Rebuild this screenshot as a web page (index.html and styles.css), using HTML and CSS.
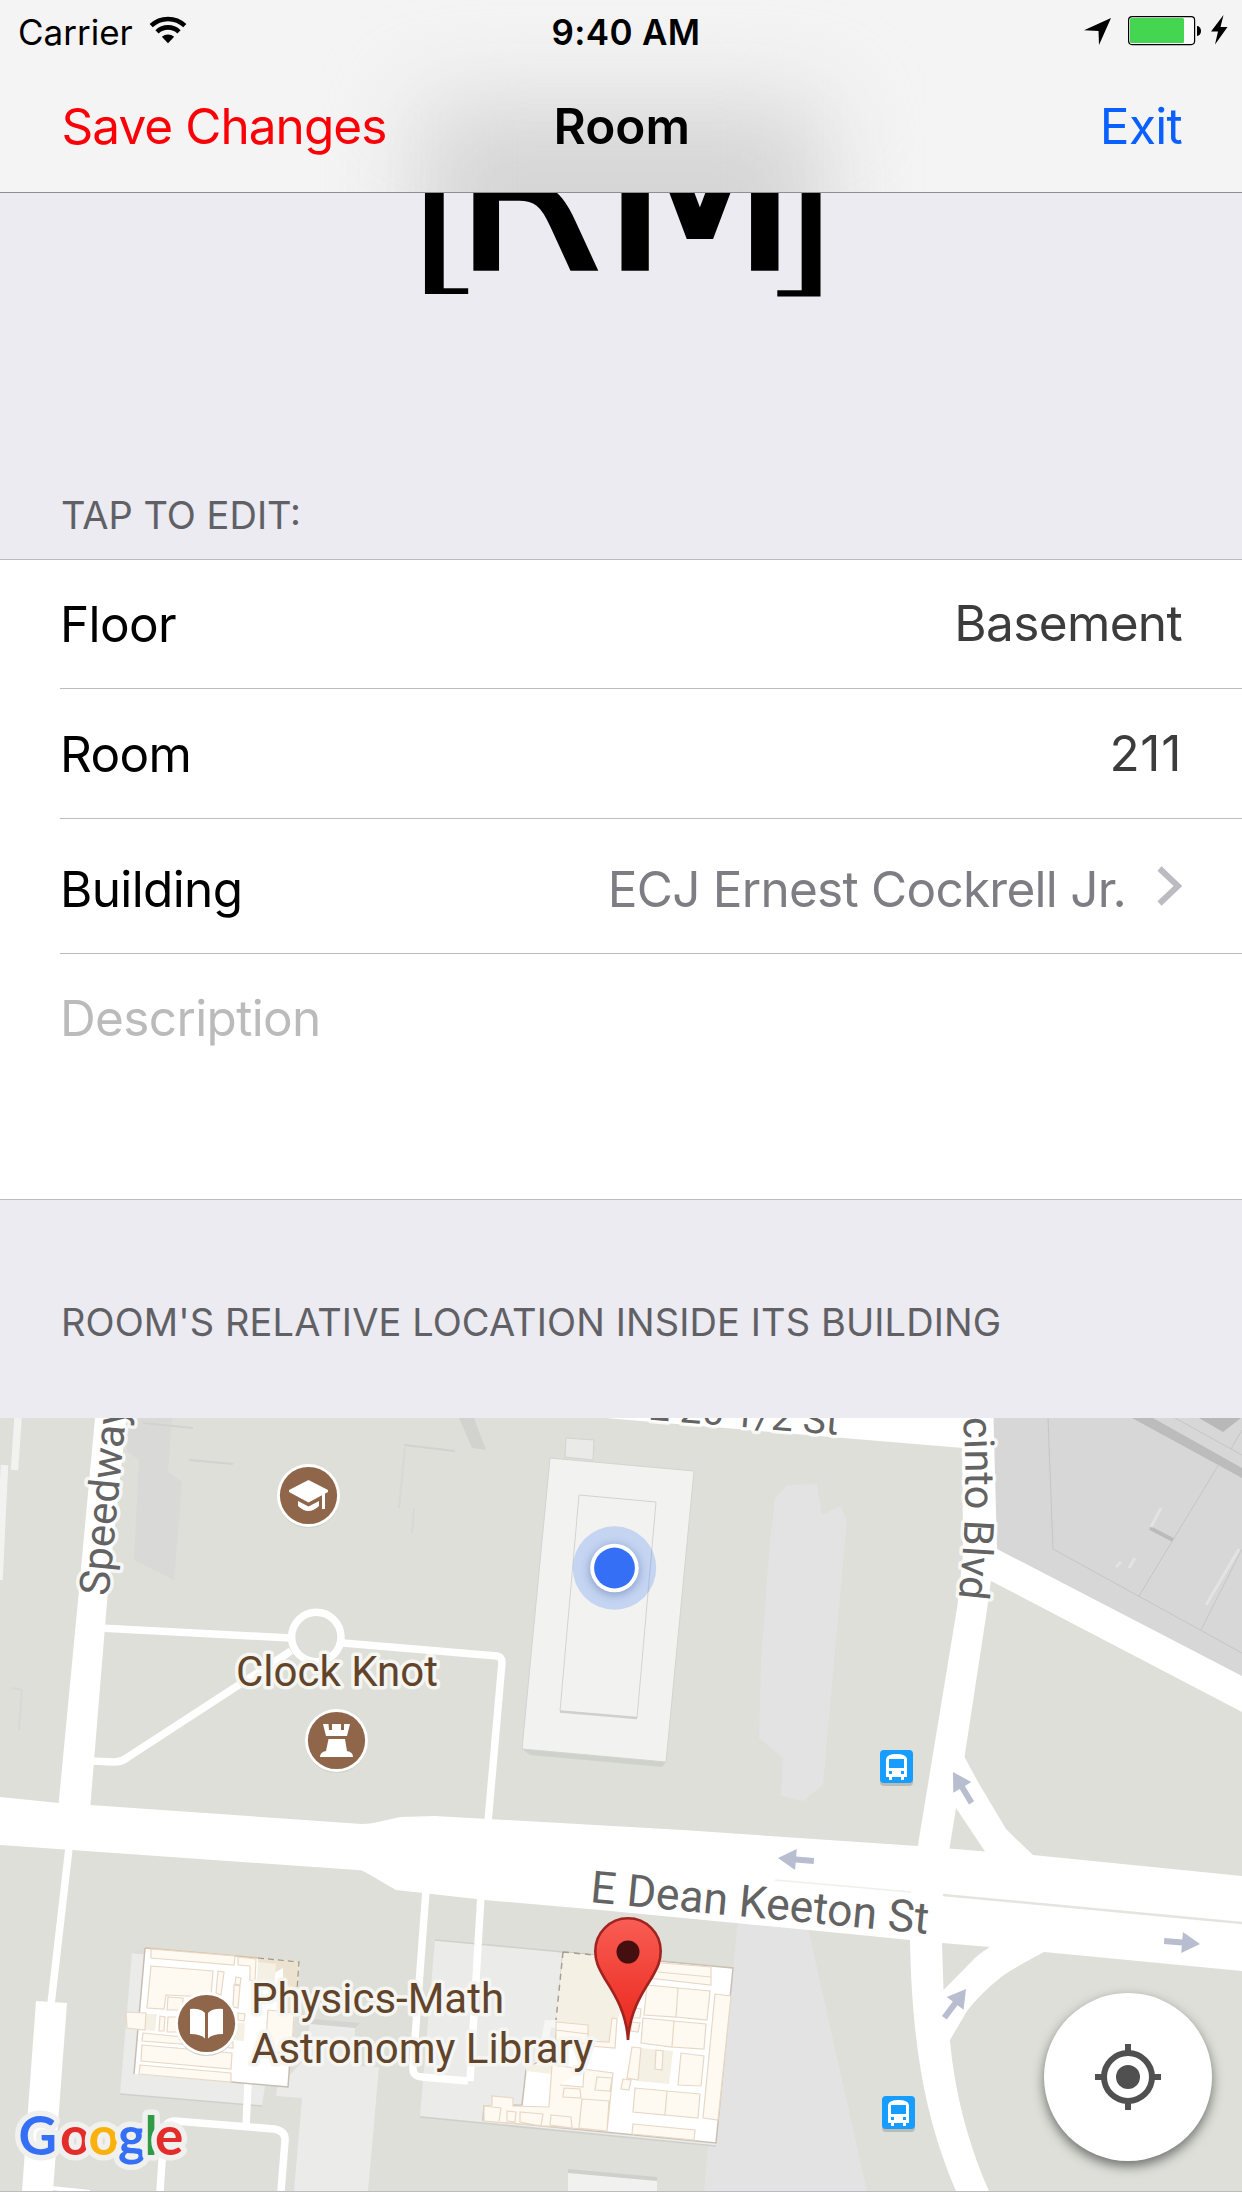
FILE: index.html
```html
<!DOCTYPE html>
<html lang="en">
<head>
<meta charset="utf-8">
<title>Room</title>
<link rel="stylesheet" href="styles.css">
</head>
<body>
<div class="screen">
  <header class="header">
    <div class="status-bar">
      <div class="carrier">
        <span class="carrier-name">Carrier</span>
        <svg class="wifi" width="38" height="28" viewBox="0 0 38 28">
          <path d="M2.2 9.6A24.5 24.5 0 0 1 35.800 9.600" fill="none" stroke="#000" stroke-width="4.600"/>
          <path d="M8 15.800A16 16 0 0 1 30 15.800" fill="none" stroke="#000" stroke-width="4.600"/>
          <path d="M12.800 20.800A9.500 9.500 0 0 1 25.200 20.800L19 27.200Z"/>
        </svg>
      </div>
      <span class="time">9:40 AM</span>
      <div class="indicators">
        <svg class="loc" width="27" height="27" viewBox="0 0 27 27"><path d="M27 0L15 27L14.500 13L0 12.200Z"/></svg>
        <svg class="battery" width="74" height="30" viewBox="0 0 74 30">
          <rect x=".6" y=".6" width="66" height="28" rx="3.500" fill="#fff" fill-opacity=".6" stroke="#000" stroke-width="1.200"/>
          <rect x="2" y="2" width="54" height="25" rx="1.500" fill="#44d551"/>
          <path d="M69 10a4 5 0 0 1 0 10z"/>
        </svg>
        <svg class="bolt" width="17" height="30" viewBox="0 0 17 30"><path d="M12.500 0L0 16.500H7L4 29.500L16.500 12H9.500Z"/></svg>
      </div>
    </div>
    <nav class="nav-bar">
      <a class="save">Save Changes</a>
      <h1 class="title">Room</h1>
      <a class="exit">Exit</a>
    </nav>
  </header>

  <section class="hero">
    <div class="logo"><span class="bracket left">[</span><span class="letter r">R</span><span class="letter">M</span><span class="bracket right">]</span></div>
    <h2 class="section-title">TAP TO EDIT:</h2>
  </section>

  <section class="form">
    <div class="row floor"><span class="label">Floor</span><span class="value">Basement</span></div>
    <div class="row room"><span class="label">Room</span><span class="value number">211</span></div>
    <div class="row building">
      <span class="label">Building</span>
      <span class="link"><span>ECJ Ernest Cockrell Jr.</span>
        <svg width="25" height="40" viewBox="0 0 25 40"><path d="M2.500 2.500L21 20L2.500 37.500" fill="none" stroke="#bcbbc1" stroke-width="6"/></svg>
      </span>
    </div>
    <div class="row description"><span class="placeholder">Description</span></div>
  </section>

  <h2 class="section-title location-title">ROOM'S RELATIVE LOCATION INSIDE ITS BUILDING</h2>

  <section class="map">
    <svg class="map-canvas" width="1242" height="773" viewBox="0 1418 1242 773">
      <defs>
        <linearGradient id="pin" x1="0" y1="0" x2="0" y2="1"><stop offset="0" stop-color="#f95d54"/><stop offset=".7" stop-color="#ee352b"/><stop offset="1" stop-color="#e4261c"/></linearGradient>
        <path id="arrow" d="M0 0L-18 -10.500V-3H-36V3H-18V10.500Z" fill="#b8bdd0"/>
        <g id="bus">
          <rect y="3" width="33" height="33" rx="4" fill="#b9bbb5"/>
          <rect width="33" height="33" rx="4" fill="#169dff"/>
          <path d="M6 9Q7 4 16.500 4Q26 4 27 9V27H24V30H21V27H12V30H9V27H6Z" fill="#fff"/>
          <path d="M9 9H24V18H9ZM9 21h3v3H9ZM21 21h3v3h-3Z" fill="#169dff"/>
        </g>
        <g id="poi"><circle cy="1.500" r="31" fill="#cfd1ca"/><circle r="31.500" fill="#fff"/><circle r="28.600" fill="#8f664a"/></g>
        <path id="jacinto" d="M963 1418Q970 1500 957 1612"/>
      </defs>
      <rect y="1418" width="1242" height="773" fill="#dddfd8"/>

      <!-- campus buildings -->
      <path d="M127 1418H172L168 1472L182 1482L174 1580L134 1560L139 1460L127 1451Z" fill="#d9d9d8"/>
      <g fill="none" stroke="#d2d3cf" stroke-width="2">
        <path d="M143 1423L193 1428M189 1460L233 1464M404 1445L455 1451"/>
        <path d="M405 1447L399 1508M414 1508L412 1533M12 1688L22 1690L19 1730" stroke="#d8d9d7"/>
      </g>
      <path d="M459 1418H474L486 1450L472 1448Z" fill="#d2d3cf"/>
      <path d="M787 1485L817 1484L822 1515L840 1506L847 1520L823 1785L803 1801L781 1796L783 1758L759 1738L761 1660L770 1540L775 1498Z" fill="#e3e3e3"/>
      <path d="M738 1920L808 1928L867 2191H704L708 2147L716 2143L733 1968Z" fill="#e3e3e3"/>
      <path d="M522 1749L666 1762L662 1767L530 1755Z" fill="#cfd1cb"/>
      <path d="M566 1438L594 1440L593 1460L565 1457Z" fill="#eaeae8" stroke="#d3d4d0"/>
      <path d="M550 1458L694 1471L666 1762L522 1749Z" fill="#f2f2f0" stroke="#d3d4d0"/>
      <path d="M579 1495L656 1502L637 1718L560 1711Z" fill="none" stroke="#d3d3d1"/>
      <path d="M560 1711.500L637 1718" stroke="#cfcfcd" stroke-width="2.500"/>

      <!-- north-east block -->
      <path d="M990 1418H1242V1678L990 1546Z" fill="#d7d7d7"/>
      <path d="M1132 1418H1153L1242 1468V1478Z" fill="#bcbcbc"/>
      <path d="M1199 1418H1241L1223 1432Z" fill="#b8b8b8"/>
      <path d="M1048 1418L1053 1549L1242 1653M1219 1464L1139 1596M1242 1549L1201 1630M1175 1418L1242 1455M1242 1430L1231 1449" fill="none" stroke="#c5c5c5"/>
      <path d="M1150 1528L1173 1540" stroke="#bbb" stroke-width="4"/>
      <path d="M1161 1508L1151 1527M1239 1549L1206 1605M1121 1562L1116 1567M1135 1558L1129 1568" stroke="#e3e3e3" stroke-width="3"/>

      <!-- library grounds -->
      <path d="M132 1953L283 1965L262 2106L120 2094Z" fill="#ebebea"/>
      <path d="M132 1953L145 1948L283 1960L277 1966Z" fill="#dcdcd9"/>
      <path d="M310 2022L355 2026L354 2066L379 2067L368 2191H294L302 2098L276 2096L277 2088L304 2060Z" fill="#ebebea"/>
      <path d="M310 2024L314 2019L360 2023L355 2028Z" fill="#d4d5d1"/>
      <path d="M435 1940L733 1968L716 2146L420 2116Z" fill="#ebebea"/>
      <path d="M435 1940L563 1952M420 2117L716 2146M120 2094L262 2106" stroke="#cfd0cc" stroke-width="1.500"/>
      <path d="M568 2170L657 2178V2191H568Z" fill="#f1f1f0"/>
      <path d="M568 2169L657 2177V2181L568 2173Z" fill="#cfd0cc"/>

      <!-- footpaths -->
      <g fill="none" stroke="#fff" stroke-width="7.500">
        <path d="M18 1418L14.500 1470M4.500 1465L-1 1580" stroke="#f2f2f1"/>
        <path d="M100 1628L290 1638"/>
        <circle cx="316.300" cy="1637" r="24.700"/>
        <path d="M343 1643L497 1656Q502 1657 502 1662L488 1822"/>
        <path d="M291 1651L128 1757Q122 1762 114 1762L90 1761"/>
        <path d="M69 1848L51 2004"/>
        <path d="M160 2191L164 2133Q165 2121 175 2121L274 2129Q286 2131 285 2141L281 2191"/>
        <path d="M248 2084L246 2126"/>
        <path d="M426 1890L413 2066Q412 2077 422 2077L468 2081"/>
        <path d="M481 1895L470 2081"/>
        <path d="M544 2045L548 2024H560" stroke="#f6f6f5"/>
        <path d="M51 2188L90 2192" stroke-width="4"/>
      </g>

      <!-- streets -->
      <g fill="#fff">
        <path d="M95 1418H126.500L108 1590L90 1810H58L79 1590Z"/>
        <path d="M36 2001L67 2003L53 2191H22Z"/>
        <path d="M605 1418L963 1448V1418Z"/>
        <path d="M962 1418H993.500L997 1549L1242 1676V1712L991 1581L987 1610L964.500 1757L978 1782L1006 1829Q1019 1842 1033 1855V1870H918V1845L957.500 1605L963 1555Z"/>
        <path d="M0 1797L59 1803L90 1805L362 1824Q370 1824 378 1822L400 1817L435 1816L683 1830L918 1846L1033 1855L1242 1876V1971L1044 1952Q1010 1970 1000 1978Q980 1994 967 2011L950 2040C953 2075 962 2130 989 2191H956C930 2130 912 2060 910 1940L850 1934L600 1910L485 1900L396 1890L365 1872Q362 1870 357 1870L72 1850L0 1845Z"/>
      </g>
      <path d="M956 1808L949.500 1848.500L985 1851.500Z" fill="#dddfd8"/>
      <path d="M942 1943L990 1947Q980 1953 975 1958L943.500 1990Z" fill="#dddfd8"/>
      <path d="M943 1895L1242 1923" stroke="#e4e5df" stroke-width="2.500"/>
      <path d="M775 1880L911 1892" stroke="#efefec" stroke-width="1.500"/>
      <use href="#arrow" transform="translate(778 1858) rotate(184.600)"/>
      <use href="#arrow" transform="translate(1200 1944) rotate(4.700)"/>
      <use href="#arrow" transform="translate(953 1772) rotate(-121)"/>
      <use href="#arrow" transform="translate(966 1989) rotate(-53)"/>

      <!-- library floor plan -->
      <path d="M145 1948L300 1962L288 2087L134 2074Z" fill="#fff"/>
      <path d="M258 1958L300 1962L291 2052L284 2051L283 1968L258 1982Z" fill="#ebe3d0"/>
      <path d="M258 1962L276 1964L274 1990L256 1990ZM146 2014L157 2014L155 2031L145 2030ZM235 2022L245 2023L244 2041L234 2040Z" fill="#f5f0e4"/>
      <path d="M145 1948L134 2074M231 2082L288 2087L290 2060" fill="none" stroke="#c6beb3" stroke-width="1.500"/>
      <path d="M145 1948L258 1958" stroke="#dcbf9e" stroke-width="1.500"/>
      <path d="M258 1958L299 1962L297 1990" fill="none" stroke="#a5967f" stroke-width="1.200" stroke-dasharray="6 4"/>
      <g fill="#fef9f1" stroke="#e7d8c6" stroke-width="1.200">
        <path d="M151 1949L235 1956L234 1965L151 1958ZM151 1966L213 1971L211 1997L166 1995L164 2009L147 2008ZM126 2012L146 2013L145 2030L127 2028ZM143 2033L233 2042V2048L142 2041ZM142 2045L232 2053L231 2069L141 2061ZM140 2065L231 2073V2082L139 2074ZM168 1997L183 1998V2010H167ZM160 2016L165 2017L164 2031H159ZM168 2017H180V2032H167ZM218 1971L224 1972L221 1995L216 1993ZM236 1977L241 1978L240 1985L235 1984ZM234 1985L240 1986L238 2008L233 2007ZM268 2010L294 2013L292 2050L265 2055ZM238 1957L256 1959L255 1981L250 1980V1966L238 1965ZM238 2013L245 2014L244 2021L238 2020Z"/>
      </g>

      <!-- room's building floor plan -->
      <path d="M563 1952L733 1968L716 2143L483 2120L484 2106L522 2105L526 2070L555 2050Z" fill="#fff" stroke="#c9c0b4" stroke-width="1.500"/>
      <path d="M563 1952L645 1960L618 2018L610 2045L556 2022ZM526 2064L570 2066L552 2074L526 2071ZM641 2048L673 2051L669 2084L638 2081Z" fill="#f5f0e4"/>
      <path d="M563 1952L594 1955M563 1952L556 2020" stroke="#a5a093" stroke-width="1.500" stroke-dasharray="6 5"/>
      <g fill="#fef9f1" stroke="#e7d8c6" stroke-width="1.200">
        <path d="M650 1962L711 1967V1985L648 1978ZM658 1972L711 1977M647 1985L678 1988L676 2017L644 2015ZM678 1988L710 1991L707 2020L676 2017ZM643 2018L674 2021L672 2047L641 2043ZM674 2021L706 2024L704 2049L672 2047ZM715 1994L731 1996L718 2120L703 2118ZM632 2047L641 2048L638 2080L627 2078ZM656 2050L663 2051L662 2070L655 2069ZM681 2053L704 2056L701 2086L678 2085ZM635 2088L667 2091L665 2115L633 2112ZM667 2091L700 2094L698 2118L665 2115ZM633 2124L695 2130L694 2140L632 2134ZM623 2079L631 2080L629 2090L621 2089ZM556 2022L588 2025V2044L556 2040ZM556 2030L588 2034M612 2018L617 2019L615 2048L590 2046V2041L609 2042ZM632 2022L640 2023L638 2032L631 2031ZM632 2008L641 2009L640 2018H632Z"/>
        <path d="M552 2065L613 2073L607 2131L484 2121V2106L492 2105V2096L513 2098V2106L549 2107ZM597 2077L612 2078L610 2091L595 2090ZM564 2088L580 2089L581 2098L563 2097ZM582 2099L609 2101L607 2131L579 2128ZM551 2115L571 2117L572 2128L550 2125ZM520 2112L543 2114L541 2126L520 2122ZM507 2111L516 2112L515 2122L507 2121ZM484 2106L501 2108L499 2121M560 2085L583 2087L584 2070"/>
      </g>

      <!-- map labels -->
      <g class="street">
        <text transform="translate(108.500 1596.500) rotate(-84.500)">Speedway</text>
        <text class="cross" transform="translate(647.500 1419.500) rotate(4.600)">E 26 1/2 St</text>
        <text class="main" transform="translate(589.500 1902) rotate(5.400)">E Dean Keeton St</text>
        <text class="side"><textPath href="#jacinto" startOffset="0">cinto Blvd</textPath></text>
      </g>
      <g class="place">
        <text x="236" y="1685.500">Clock Knot</text>
        <text x="251" y="2012.500">Physics-Math</text>
        <text x="251" y="2063">Astronomy Library</text>
      </g>

      <!-- places -->
      <use href="#poi" x="308.500" y="1495.500"/>
      <path d="M289 1490L308.500 1480L328 1490V1492L308.500 1502.500L289 1492ZM298 1501L308.500 1506.500L319 1501V1506Q308.500 1516 298 1506ZM322 1494H325V1509H322Z" fill="#fff"/>
      <use href="#poi" x="336.500" y="1740.500"/>
      <path d="M323 1724H328.500L329 1730H332V1724H341V1730H344V1724H350L347 1736H326ZM328.500 1739H345L347 1751Q353 1752 353 1757H320Q320 1752 326 1751Z" fill="#fff"/>
      <use href="#poi" x="206.500" y="2023.500"/>
      <path d="M190 2009Q200 2008 205 2013V2038.500Q201 2034 190 2034ZM208 2013Q213 2008 223 2009V2034Q212 2034 208 2038.500Z" fill="#fff"/>
      <use href="#bus" x="880" y="1750"/>
      <use href="#bus" x="882" y="2096"/>

      <!-- current position -->
      <circle cx="614.500" cy="1568" r="41.700" fill="#3b7cf3" fill-opacity=".25"/>
      <circle class="dot-shadow" cx="614.500" cy="1570" r="25"/>
      <circle cx="614.500" cy="1568" r="24.300" fill="#fff"/>
      <circle cx="614.500" cy="1568" r="20.400" fill="#356ff5"/>

      <!-- room pin -->
      <path d="M628 2040C626.500 2014 616 1996 605 1979C598 1967 595.300 1961 595.300 1951A32.700 32.700 0 0 1 660.700 1951C660.700 1961 658 1967 651 1979C640 1996 629.500 2014 628 2040Z" fill="url(#pin)" stroke="#a1231f" stroke-width="2.600"/>
      <circle cx="628" cy="1952" r="11.500" fill="#450f0f"/>

      <text class="google"><tspan x="18.500" y="2154.500" fill="#356ff5">G</tspan><tspan x="60" fill="#e32d2b">o</tspan><tspan x="88.500" fill="#fab10b">o</tspan><tspan x="118" fill="#356ff5">g</tspan><tspan x="144.500" fill="#2f9b47">l</tspan><tspan x="155" fill="#e32d2b">e</tspan></text>
    </svg>
    <button class="locate" aria-label="My location">
      <svg width="68" height="68" viewBox="-34 -34 68 68" stroke="#505050" stroke-width="6" fill="none">
        <circle r="24"/><circle r="12" fill="#505050" stroke="none"/>
        <path d="M0 -33V-24M0 33V24M-33 0H-24M33 0H24"/>
      </svg>
    </button>
  </section>
</div>
</body>
</html>
```
FILE: styles.css
```css
* { box-sizing: border-box; }

body {
  margin: 0;
  background: #fff;
  font-family: Inter, "Liberation Sans", sans-serif;
  color: #000;
}

h1, h2 { margin: 0; font-weight: 400; }

.screen {
  width: 1242px;
  height: 2208px;
  display: flex;
  flex-direction: column;
  overflow: hidden;
  background: #fff;
  white-space: nowrap;
}

/* header */
.header {
  position: relative;
  z-index: 1;
  height: 193px;
  flex: none;
  overflow: hidden;
  background: #f4f4f4;
  border-bottom: 1px solid #8f8e92;
}

.header::before {
  content: "";
  position: absolute;
  left: 420px;
  top: 104px;
  width: 404px;
  height: 320px;
  background: #d5d5d5;
  filter: blur(46px);
}

.status-bar,
.nav-bar {
  position: relative;
  display: grid;
  grid-template-columns: 1fr auto 1fr;
  align-items: center;
}

.status-bar {
  height: 60px;
  padding: 3px 14px 0 18px;
  font-size: 35px;
}

.carrier { display: flex; align-items: center; gap: 16px; }
.wifi { margin-top: -4px; }
.time { padding-left: 6px; font-weight: 600; letter-spacing: .35px; }

.indicators {
  display: flex;
  align-items: center;
  justify-content: flex-end;
}

.loc { margin-right: 17px; }
.battery { margin-top: -1px; margin-right: 9px; }
.bolt { margin-top: -3px; }

.nav-bar {
  height: 132px;
  padding: 0 60px 0 61.5px;
  font-size: 49.5px;
}

.save { color: #fc0008; letter-spacing: -.95px; }
.title { font-size: 49.5px; font-weight: 600; }
.exit { color: #0a60ff; justify-self: end; letter-spacing: -.7px; }

/* logo and section titles */
.hero {
  height: 366px;
  flex: none;
  display: flex;
  flex-direction: column;
  justify-content: space-between;
  overflow: hidden;
  background: #ebebf1;
}

.logo {
  display: flex;
  justify-content: center;
  height: 227px;
  margin-top: -117px;
  font-family: "DejaVu Sans", sans-serif;
  font-size: 227px;
  line-height: 227px;
}

.letter { -webkit-text-stroke: 5.6px #000; }
.letter.r { transform: translateX(5px) scaleX(.917); }
.bracket.left { transform: translate(47.5px, 6px) scaleX(.92); clip-path: inset(0 0 15px 0); }
.bracket.right { transform: translate(-44.5px, 8px) scaleX(.92); clip-path: inset(0 0 14.5px 0); }

.section-title {
  padding: 0 61px;
  font-size: 38px;
  line-height: 46px;
  color: #606065;
}

.hero .section-title { height: 67px; }

.location-title {
  height: 218px;
  flex: none;
  padding-top: 99px;
  background: #ebebf1;
  letter-spacing: .1px;
}

/* form */
.form {
  flex: none;
  border-top: 1px solid #bcbbc1;
  border-bottom: 1px solid #bcbbc1;
}

.row {
  display: flex;
  justify-content: space-between;
  align-items: center;
  margin-left: 60px;
  padding-right: 60px;
  border-bottom: 1px solid #bcbbc1;
  font-size: 49.5px;
  line-height: 60px;
  letter-spacing: -.65px;
}

.floor { height: 129px; }
.room { height: 130px; }
.building { height: 135px; padding-top: 5px; }
.description { height: 245px; align-items: flex-start; padding-top: 34px; border-bottom: 0; }

.value { color: #3c3c3c; margin-top: -2px; }
.number { letter-spacing: .7px; }
.link { display: flex; align-items: center; gap: 31px; color: #7e7d83; letter-spacing: -.75px; }
.link svg { margin-top: -5px; }
.placeholder { color: #bbb; }

/* map */
.map {
  position: relative;
  height: 774px;
  flex: none;
  border-bottom: 1px solid #bcbbc1;
}

.map-canvas { display: block; }

.map-canvas text {
  font-family: Roboto, sans-serif;
  font-size: 42px;
  paint-order: stroke;
  stroke-linejoin: round;
}

.map-canvas .cross { font-size: 39px; }
.map-canvas .main { font-size: 44.500px; }
.map-canvas .side { font-size: 41.500px; }

.street { fill: #636363; stroke: #fff; stroke-opacity: .75; stroke-width: 7px; }
.place { fill: #62442a; stroke: #f5f5f2; stroke-width: 7px; }

.map-canvas .google {
  font-family: Lato, sans-serif;
  font-size: 53px;
  font-weight: 700;
  stroke: #f0f0ef;
  stroke-width: 11px;
}

.dot-shadow { fill: #1c3f80; fill-opacity: .35; filter: blur(4px); }

.locate {
  position: absolute;
  left: 1044px;
  top: 575px;
  width: 168px;
  height: 168px;
  display: flex;
  align-items: center;
  justify-content: center;
  padding: 0;
  border: 0;
  border-radius: 50%;
  background: #fff;
  box-shadow: 0 5px 12px rgba(0, 0, 0, .5);
}
```
